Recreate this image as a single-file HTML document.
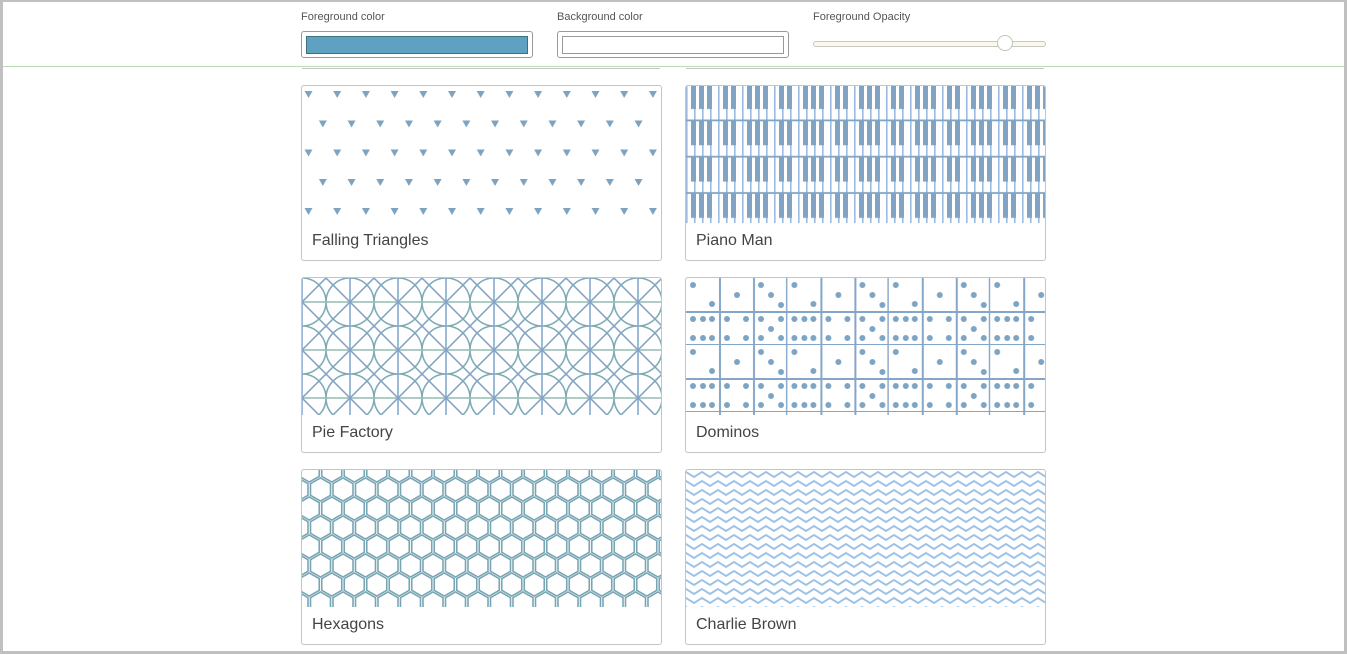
<!DOCTYPE html>
<html><head><meta charset="utf-8"><style>
html,body{margin:0;padding:0}
body{width:1347px;height:655px;overflow:hidden;background:#fff;font-family:"Liberation Sans",sans-serif;position:relative}
.frame{position:absolute;left:0;top:0;width:1341px;height:649px;border:3px solid #c0c0c0;border-top-width:2px;border-bottom-width:3px;overflow:hidden}
.lbl{position:absolute;top:11px;font-size:11px;color:#555}
.box{position:absolute;top:31px;width:232px;height:27px;border:1px solid #999;border-radius:3px;box-sizing:border-box}
.box i{position:absolute;left:4px;top:4px;right:4px;bottom:3px;border:1px solid #999}
.card{position:absolute;width:361px;height:176px;border:1px solid #c4c4c4;border-radius:3px;box-sizing:border-box;overflow:hidden}
.card svg{position:absolute;left:0;top:0}
.card span{position:absolute;left:10px;top:146px;font-size:16px;color:#444}
</style></head><body>
<div class="frame"></div>
<div class="lbl" style="left:301px">Foreground color</div>
<div class="lbl" style="left:557px">Background color</div>
<div class="lbl" style="left:813px">Foreground Opacity</div>
<div class="box" style="left:301px"><i style="background:#5ea1c0;border-color:#3d7080"></i></div>
<div class="box" style="left:557px"><i></i></div>
<div style="position:absolute;left:813px;top:41px;width:231px;height:4px;border:1px solid #c8c8c0;border-radius:3px;background:#fbf7ee"></div>
<div style="position:absolute;left:997px;top:35px;width:14px;height:14px;border:1px solid #b8ccb4;border-radius:50%;background:#fff"></div>
<div style="position:absolute;left:3px;right:3px;top:66px;height:1px;background:#b9dcb5"></div>
<div style="position:absolute;left:302px;width:358px;top:68px;height:1px;background:#c4c4c4"></div>
<div style="position:absolute;left:686px;width:358px;top:68px;height:1px;background:#c4c4c4"></div>

<svg width="0" height="0" style="position:absolute"><defs>
<pattern id="tri" width="28.7" height="58.5" patternUnits="userSpaceOnUse" x="2.5" y="5">
<polygon points="0,0 8,0 4,7" fill="#7ea3c0"/><polygon points="14.35,29.5 22.35,29.5 18.35,36.5" fill="#7ea3c0"/></pattern>
<pattern id="pia" width="56" height="36.3" patternUnits="userSpaceOnUse" x="0" y="-1">
<g fill="#9bbbe0"><rect x="0" y="0" width="1.6" height="36.3"/><rect x="8" y="0" width="1.6" height="36.3"/><rect x="16" y="0" width="1.6" height="36.3"/><rect x="24" y="0" width="1.6" height="36.3"/><rect x="32" y="0" width="1.6" height="36.3"/><rect x="40" y="0" width="1.6" height="36.3"/><rect x="48" y="0" width="1.6" height="36.3"/></g>
<g fill="#82a4c4"><rect x="5" y="0" width="5" height="24"/><rect x="13" y="0" width="5" height="24"/><rect x="21" y="0" width="5" height="24"/><rect x="37" y="0" width="5" height="24"/><rect x="45" y="0" width="5" height="24"/><rect x="0" y="34.5" width="56" height="2"/></g></pattern>
<pattern id="pie" width="48" height="48" patternUnits="userSpaceOnUse" x="24" y="0">
<g fill="none" stroke-width="1.6"><circle cx="24" cy="24" r="24" stroke="#7fabb8"/><line x1="0" y1="24" x2="48" y2="24" stroke="#92bcb4"/><line x1="24" y1="0" x2="24" y2="48" stroke="#85a8d0"/><line x1="0" y1="0" x2="48" y2="48" stroke="#85a5c4"/><line x1="48" y1="0" x2="0" y2="48" stroke="#85a5c4"/></g></pattern>
<pattern id="dom" width="101.4" height="67" patternUnits="userSpaceOnUse" x="0" y="0">
<g fill="#7ea4c4">
<circle cx="7" cy="7" r="3"/><circle cx="26" cy="26" r="3"/>
<circle cx="51" cy="17" r="3"/>
<circle cx="75" cy="7" r="3"/><circle cx="85" cy="17" r="3"/><circle cx="95" cy="27" r="3"/>
<circle cx="7" cy="41" r="3"/><circle cx="17" cy="41" r="3"/><circle cx="26" cy="41" r="3"/><circle cx="7" cy="60" r="3"/><circle cx="17" cy="60" r="3"/><circle cx="26" cy="60" r="3"/>
<circle cx="41" cy="41" r="3"/><circle cx="60" cy="41" r="3"/><circle cx="41" cy="60" r="3"/><circle cx="60" cy="60" r="3"/>
<circle cx="75" cy="41" r="3"/><circle cx="95" cy="41" r="3"/><circle cx="85" cy="51" r="3"/><circle cx="75" cy="60" r="3"/><circle cx="95" cy="60" r="3"/></g>
<g fill="#85a6c8"><rect x="33" y="0" width="2" height="67"/><rect x="67" y="0" width="2" height="67"/><rect x="100" y="0" width="2" height="67"/><rect x="0" y="33" width="101.4" height="2"/><rect x="0" y="66" width="101.4" height="2"/></g></pattern>
<polygon id="hx" points="0,-11.6 10,-5.8 10,5.8 0,11.6 -10,5.8 -10,-5.8"/>
<pattern id="hex" width="22.5" height="38" patternUnits="userSpaceOnUse" x="-4" y="-12">
<g fill="none" stroke="#78a5b4" stroke-width="1.6">
<use href="#hx" x="11.25" y="12.5"/><use href="#hx" x="0" y="31.5"/><use href="#hx" x="22.5" y="31.5"/><use href="#hx" x="0" y="-6.5"/><use href="#hx" x="22.5" y="-6.5"/><use href="#hx" x="11.25" y="50.5"/></g></pattern>
<pattern id="zig" width="16" height="9" patternUnits="userSpaceOnUse" x="0" y="0">
<polyline points="-8,7 0,2 8,7 16,2 24,7" fill="none" stroke="#9dc2e6" stroke-width="2"/></pattern>
</defs></svg>

<div class="card" style="left:301px;top:85px"><svg width="361" height="137"><rect width="361" height="137" fill="url(#tri)"/></svg><span>Falling Triangles</span></div>
<div class="card" style="left:685px;top:85px"><svg width="361" height="137"><rect width="361" height="137" fill="url(#pia)"/></svg><span>Piano Man</span></div>
<div class="card" style="left:301px;top:277px"><svg width="361" height="137"><rect width="361" height="137" fill="url(#pie)"/></svg><span>Pie Factory</span></div>
<div class="card" style="left:685px;top:277px"><svg width="361" height="137"><rect width="361" height="137" fill="url(#dom)"/></svg><span>Dominos</span></div>
<div class="card" style="left:301px;top:469px"><svg width="361" height="137"><rect width="361" height="137" fill="url(#hex)"/></svg><span>Hexagons</span></div>
<div class="card" style="left:685px;top:469px"><svg width="361" height="137"><rect width="361" height="137" fill="url(#zig)"/></svg><span>Charlie Brown</span></div>
</body></html>
